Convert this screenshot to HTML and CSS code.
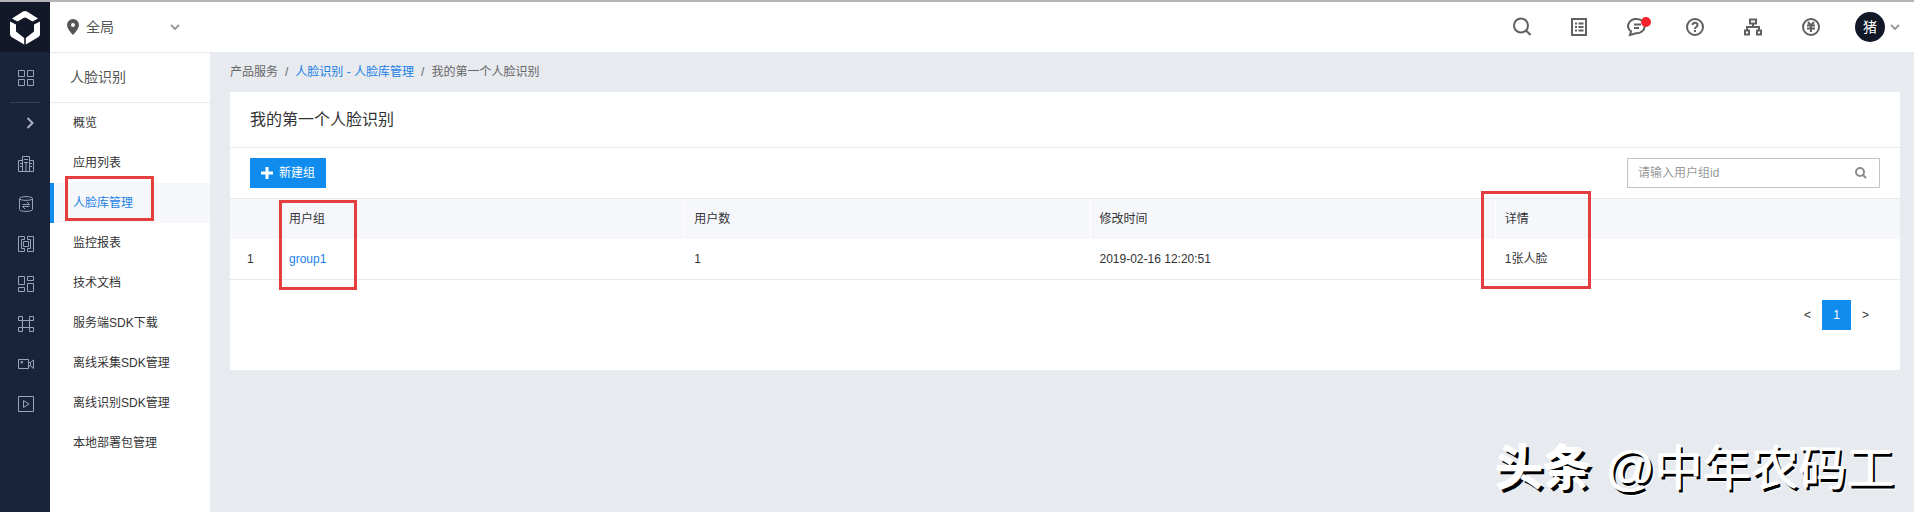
FILE: index.html
```html
<!DOCTYPE html>
<html lang="zh-CN">
<head>
    <meta charset="UTF-8">
    <meta name="viewport" content="width=device-width, initial-scale=1.0">
    <title>人脸识别 - 人脸库管理</title>
    <link rel="stylesheet" href="styles.css">
</head>
<body>
    <nav class="rail">
        <a class="logo" href="#" aria-label="首页">
            <svg width="32" height="36" viewBox="0 0 32 36" fill="#fff">
                <path d="M3 9.500L14 2.500Q16 1.300 18 2.500L29 9.500L23.500 12.500L17.500 9Q16 8.200 14.500 9L8.500 12.500Z"/>
                <path d="M1 12.500L7 15.500V22.500L15.200 29V35.500L2.500 28Q1 27 1 25Z"/>
                <path d="M31 12.500L25 15.500V22.500L16.800 29V35.500L29.500 28Q31 27 31 25Z"/>
            </svg>
        </a>
        <a class="rail-grid" href="#" aria-label="全部产品">
            <svg class="rail-icon" viewBox="0 0 18 18"><path d="M1.500 1.500h6v6h-6zM10.500 1.500h6v6h-6zM1.500 10.500h6v6h-6zM10.500 10.500h6v6h-6z"/></svg>
        </a>
        <button class="rail-toggle" aria-label="展开">
            <svg width="8" height="12" viewBox="0 0 8 12"><path d="M1.500 1L6.500 6L1.500 11" fill="none" stroke="#a9afc4" stroke-width="2"/></svg>
        </button>
        <a class="rail-item" href="#" aria-label="云服务器">
            <svg class="rail-icon" viewBox="0 0 18 18"><path d="M5.500 16.500v-15h7v15M5.500 5.500h-4v11h15v-11h-4M7 4.500h4M7 7.500h4M9 7.500v9M3 8.500h2.500M3 11.500h2.500M12.500 8.500H15M12.500 11.500H15"/></svg>
        </a>
        <a class="rail-item" href="#" aria-label="数据库">
            <svg class="rail-icon" viewBox="0 0 18 18"><path d="M2.500 3.500c0-2.500 13-2.500 13 0s-13 2.500-13 0v11c0 2.500 13 2.500 13 0v-11M5.500 9.500h7l-2.500-2.500M12.500 11.500h-7l2.500 2.500"/></svg>
        </a>
        <a class="rail-item" href="#" aria-label="存储">
            <svg class="rail-icon" viewBox="0 0 18 18"><path d="M7.500 1.500h-6v15h6v-3h-3v-9h3zM10.500 1.500h6v15h-6v-3h3v-9h-3zM6.500 6.500h5v5h-5z"/></svg>
        </a>
        <a class="rail-item" href="#" aria-label="应用">
            <svg class="rail-icon" viewBox="0 0 18 18"><path d="M1.500 1.500h6v8h-6zM10.500 1.500h6v4h-6zM1.500 12.500h6v4h-6zM10.500 8.500h6v8h-6z"/></svg>
        </a>
        <a class="rail-item" href="#" aria-label="网络">
            <svg class="rail-icon" viewBox="0 0 18 18"><path d="M1.500 1.500h4v4h-4zM12.500 1.500h4v4h-4zM1.500 12.500h4v4h-4zM12.500 12.500h4v4h-4zM5.500 5.500h7v7h-7z"/></svg>
        </a>
        <a class="rail-item" href="#" aria-label="视频">
            <svg class="rail-icon" viewBox="0 0 18 18"><path d="M1.500 4.500h10v9h-10zM11.500 7.500h2l3-2.500v8.500l-3-2.500h-2M13.500 7.500v3.500M4 6.500h1.500v1.500H4z"/></svg>
        </a>
        <a class="rail-item" href="#" aria-label="播放">
            <svg class="rail-icon" viewBox="0 0 18 18"><path d="M1.500 1.500h15v15h-15zM6.500 5.500v7l5.500-3.500z"/></svg>
        </a>
    </nav>

    <div class="page">
        <header class="topbar">
            <button class="region">
                <svg width="12" height="16" viewBox="0 0 12 16"><path fill="#555" fill-rule="evenodd" d="M6 0a6 6 0 0 0-6 6c0 4 6 10 6 10s6-6 6-10a6 6 0 0 0-6-6zm0 4a2 2 0 1 1 0 4a2 2 0 0 1 0-4z"/></svg>
                <span class="region-name">全局</span>
                <svg class="arrow" viewBox="0 0 10 6"><path d="M1 1l4 4 4-4"/></svg>
            </button>
            <div class="tools">
                <button class="tool" aria-label="搜索">
                    <svg class="tool-icon" viewBox="0 0 20 20"><circle cx="10" cy="8.500" r="7"/><path d="M15 13.500l4.500 4.500"/></svg>
                </button>
                <button class="tool" aria-label="工单">
                    <svg class="tool-icon" viewBox="0 0 20 20"><path d="M3 2h14v16H3zM6 6.500h2M9.500 6.500h5M6 10h2M9.500 10h5M6 13.500h2M9.500 13.500h5"/></svg>
                </button>
                <button class="tool" aria-label="消息">
                    <svg class="tool-icon" viewBox="0 0 20 20"><path d="M10 2a8 7 0 1 1-1 14.300L3 18l1-3.700A8 7 0 0 1 10 2zM7 7.500h7M7 11h5"/></svg>
                    <span class="dot"></span>
                </button>
                <button class="tool" aria-label="帮助">
                    <svg class="tool-icon" viewBox="0 0 20 20"><circle cx="10" cy="10" r="8"/><path d="M7.500 8a2.500 2.300 0 1 1 3.700 2Q10 10.700 10 12M10 13v2"/></svg>
                </button>
                <button class="tool" aria-label="组织">
                    <svg class="tool-icon" viewBox="0 0 20 20"><path d="M7 2.500h6v4H7zM2 13.500h4v4H2zM14 13.500h4v4h-4zM10 6.500v4M4 13.500V10h12v3.500"/></svg>
                </button>
                <button class="tool" aria-label="费用">
                    <svg class="tool-icon" viewBox="0 0 20 20"><circle cx="10" cy="10" r="8"/><path d="M7 5l3 3.500L13 5M6 8.500h8M6 11.500h8M10 8.500V15"/></svg>
                </button>
                <button class="user">
                    <span class="avatar">猪</span>
                    <svg class="arrow" viewBox="0 0 10 6"><path d="M1 1l4 4 4-4"/></svg>
                </button>
            </div>
        </header>

        <div class="body">
            <aside class="menu">
                <h2 class="menu-title">人脸识别</h2>
                <a class="menu-item" href="#">概览</a>
                <a class="menu-item" href="#">应用列表</a>
                <a class="menu-item active" href="#">人脸库管理<span class="mark mark-menu"></span></a>
                <a class="menu-item" href="#">监控报表</a>
                <a class="menu-item" href="#">技术文档</a>
                <a class="menu-item" href="#">服务端SDK下载</a>
                <a class="menu-item" href="#">离线采集SDK管理</a>
                <a class="menu-item" href="#">离线识别SDK管理</a>
                <a class="menu-item" href="#">本地部署包管理</a>
            </aside>

            <main class="content">
                <div class="breadcrumb">
                    <span>产品服务</span>
                    <span>/</span>
                    <a href="#">人脸识别 - 人脸库管理</a>
                    <span>/</span>
                    <span>我的第一个人脸识别</span>
                </div>

                <section class="card">
                    <h1 class="card-title">我的第一个人脸识别</h1>
                    <div class="toolbar">
                        <button class="create">
                            <svg width="12" height="12" viewBox="0 0 12 12"><path d="M6 0v12M0 6h12" stroke="#fff" stroke-width="3"/></svg>
                            新建组
                        </button>
                        <div class="search">
                            <input type="text" placeholder="请输入用户组id" aria-label="请输入用户组id">
                            <svg width="12" height="12" viewBox="0 0 12 12" fill="none" stroke="#8c8c8c" stroke-width="2"><circle cx="5" cy="5" r="4"/><path d="M8 8l3 3"/></svg>
                        </div>
                    </div>

                    <table class="groups">
                        <thead>
                            <tr>
                                <th class="index"></th>
                                <th>用户组<span class="mark mark-group"></span></th>
                                <th>用户数</th>
                                <th>修改时间</th>
                                <th>详情<span class="mark mark-detail"></span></th>
                            </tr>
                        </thead>
                        <tbody>
                            <tr>
                                <td class="index">1</td>
                                <td><a href="#">group1</a></td>
                                <td>1</td>
                                <td>2019-02-16 12:20:51</td>
                                <td>1张人脸</td>
                            </tr>
                        </tbody>
                    </table>

                    <div class="pager">
                        <button>&lt;</button>
                        <button class="current">1</button>
                        <button>&gt;</button>
                    </div>
                </section>
            </main>
        </div>
    </div>

    <div class="watermark"><b>头条</b><span>@中年农码工</span></div>
</body>
</html>
```
FILE: styles.css
```css
/* Global Styles */
* {
    box-sizing: border-box;
}

body {
    display: flex;
    min-height: 100vh;
    margin: 0;
    border-top: 2px solid #b4b4b4;
    background-color: #e7eaef;
    color: #333;
    font-family: "Liberation Sans", "Noto Sans CJK SC", sans-serif;
    font-size: 12px;
    line-height: 20px;
}

a {
    color: #1b7fe6;
    text-decoration: none;
}

button {
    padding: 0;
    border: none;
    background: none;
    color: inherit;
    font: inherit;
    cursor: pointer;
}

svg {
    display: block;
    flex: none;
}

/* Icon rail */
.rail {
    display: flex;
    flex-direction: column;
    flex: none;
    width: 50px;
    background-color: #1a233c;
}

.logo,
.rail-grid,
.rail-item,
.rail-toggle {
    display: flex;
    align-items: center;
    justify-content: center;
}

.logo {
    height: 50px;
    background-color: #121828;
}

.rail-grid {
    height: 51px;
    margin: 0 10px;
    padding: 2px 0 0 2px;
    border-bottom: 1px solid #353d55;
}

.rail-toggle {
    height: 41px;
    padding: 0 0 2px 10px;
}

.rail-item {
    height: 40px;
    padding-left: 2px;
}

.rail-icon {
    width: 18px;
    height: 18px;
    fill: none;
    stroke: #9aa2bb;
    stroke-width: 1;
}

/* Top bar */
.page {
    display: flex;
    flex-direction: column;
    flex: 1;
    min-width: 0;
}

.topbar {
    display: flex;
    align-items: center;
    justify-content: space-between;
    height: 50px;
    padding: 0 14px 0 17px;
    background-color: #fff;
}

.region {
    display: flex;
    align-items: center;
    color: #555;
    font-size: 14px;
}

.region-name {
    width: 84px;
    margin-left: 7px;
    text-align: left;
}

.arrow {
    width: 10px;
    height: 6px;
    fill: none;
    stroke: #999;
    stroke-width: 2;
}

.tools,
.user {
    display: flex;
    align-items: center;
}

.tools {
    gap: 38px;
}

.tool {
    position: relative;
}

.tool-icon {
    width: 20px;
    height: 20px;
    fill: none;
    stroke: #606060;
    stroke-width: 2;
}

.dot {
    position: absolute;
    top: 0;
    right: -4px;
    width: 10px;
    height: 10px;
    border-radius: 50%;
    background-color: #f5222d;
}

.user {
    gap: 5px;
    margin-left: -4px;
}

.avatar {
    width: 30px;
    border-radius: 50%;
    background-color: #121828;
    color: #fff;
    font-size: 14px;
    line-height: 30px;
}

/* Side menu */
.body {
    display: flex;
    flex: 1;
}

.menu {
    flex: none;
    width: 160px;
    background-color: #fff;
}

.menu-title {
    margin: 0;
    padding: 0 20px;
    border-top: 1px solid #e6e9ee;
    border-bottom: 1px solid #e6e9ee;
    color: #555;
    font-size: 14px;
    font-weight: normal;
    line-height: 49px;
}

.menu-item {
    display: block;
    position: relative;
    padding-left: 23px;
    color: #333;
    line-height: 40px;
}

.menu-item.active {
    padding-left: 19px;
    border-left: 4px solid #108cee;
    background-color: #f5f7fb;
    color: #1b7fe6;
}

/* Content */
.content {
    flex: 1;
    min-width: 0;
    padding: 10px 14px 20px 20px;
}

.breadcrumb {
    display: flex;
    gap: 7px;
    margin-bottom: 10px;
    color: #666;
}

.card {
    padding-bottom: 40px;
    background-color: #fff;
}

.card-title {
    margin: 0;
    padding: 0 20px;
    border-bottom: 1px solid #e6e9ee;
    font-size: 16px;
    font-weight: normal;
    line-height: 55px;
}

.toolbar {
    display: flex;
    justify-content: space-between;
    padding: 10px 20px;
}

.create {
    display: flex;
    align-items: center;
    justify-content: center;
    gap: 6px;
    width: 76px;
    height: 30px;
    background-color: #108cee;
    color: #fff;
}

.search {
    display: flex;
    align-items: center;
    width: 253px;
    height: 30px;
    padding: 0 12px 0 10px;
    border: 1px solid #c4c4c4;
}

.search input {
    flex: 1;
    min-width: 0;
    padding: 0;
    border: none;
    outline: none;
    background: none;
    font: inherit;
}

.search input::placeholder {
    color: #999;
}

/* Groups table */
.groups {
    width: 100%;
    border-top: 1px solid #e6e9ee;
    border-bottom: 1px solid #e6e9ee;
    border-spacing: 0;
    table-layout: fixed;
}

.groups th,
.groups td {
    position: relative;
    height: 40px;
    padding: 0 9px;
    font-weight: normal;
    text-align: left;
}

.groups th {
    border-left: 1px solid #fff;
    background-color: #f5f7fb;
}

.groups td {
    border-left: 1px solid transparent;
}

.groups .index {
    width: 49px;
    padding-left: 16px;
}

.groups th.index,
.groups th.index + th {
    border-left-color: #f5f7fb;
}

/* Pager */
.pager {
    display: flex;
    justify-content: flex-end;
    padding: 20px 20px 0;
}

.pager button {
    width: 29px;
    height: 30px;
}

.pager .current {
    background-color: #108cee;
    color: #fff;
}

/* Red highlight frames */
.mark {
    position: absolute;
    z-index: 1;
    border: 3px solid #e53e3e;
    pointer-events: none;
}

.mark-menu {
    top: -7px;
    left: 11px;
    width: 89px;
    height: 45px;
}

.mark-group {
    top: 1px;
    left: -1px;
    width: 78px;
    height: 90px;
}

.mark-detail {
    top: -8px;
    left: -15px;
    width: 110px;
    height: 98px;
}

/* Watermark */
.watermark {
    position: absolute;
    right: 20px;
    bottom: 8px;
    display: flex;
    gap: 14px;
    color: #fff;
    font-size: 48px;
    line-height: 70px;
    text-shadow: 1px 0 0 #fff, 3px 3px 0 #000, 4px 4px 0 #fff;
}

.watermark b {
    text-shadow: -1px -1px 0 #fff, 3px 3px 0 #000;
}
```
